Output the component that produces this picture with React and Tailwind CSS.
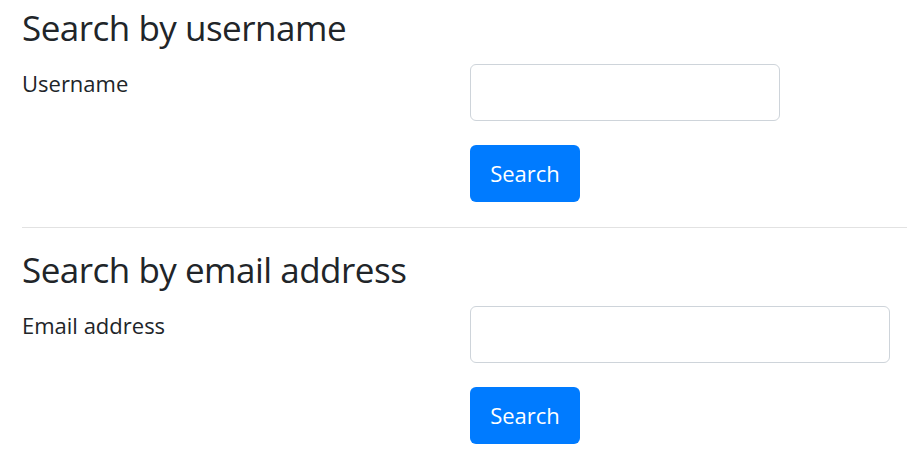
import React from "react";

const SearchSection = ({ title, label, inputWidth }) => {
  return (
    <section>
      <h3 className="text-[35px] leading-[48px] tracking-[-0.5px] font-normal">{title}</h3>
      <div className="flex mt-[12px]">
        <label className="w-[448px] text-[22px] leading-[39px]">{label}</label>
        <div className="flex flex-col gap-[24px]">
          <input
            type="text"
            className={`${inputWidth} h-[57px] border border-[#ced4da] rounded-[6px] bg-white px-3`}
          />
          <button className="w-[110px] h-[57px] bg-[#007bff] rounded-[6px] text-white text-[22px]">
            Search
          </button>
        </div>
      </div>
    </section>
  );
};

const App = () => {
  return (
    <div
      className="pl-[22px] pt-[4px] bg-white text-[#212529] min-h-screen"
      style={{ fontFamily: '"Open Sans", sans-serif' }}
    >
      <SearchSection title="Search by username" label="Username" inputWidth="w-[310px]" />
      <hr className="border-0 border-t border-[#e2e2e2] mt-[25px] mb-[18px]" />
      <SearchSection title="Search by email address" label="Email address" inputWidth="w-[420px]" />
    </div>
  );
};

export default App;
